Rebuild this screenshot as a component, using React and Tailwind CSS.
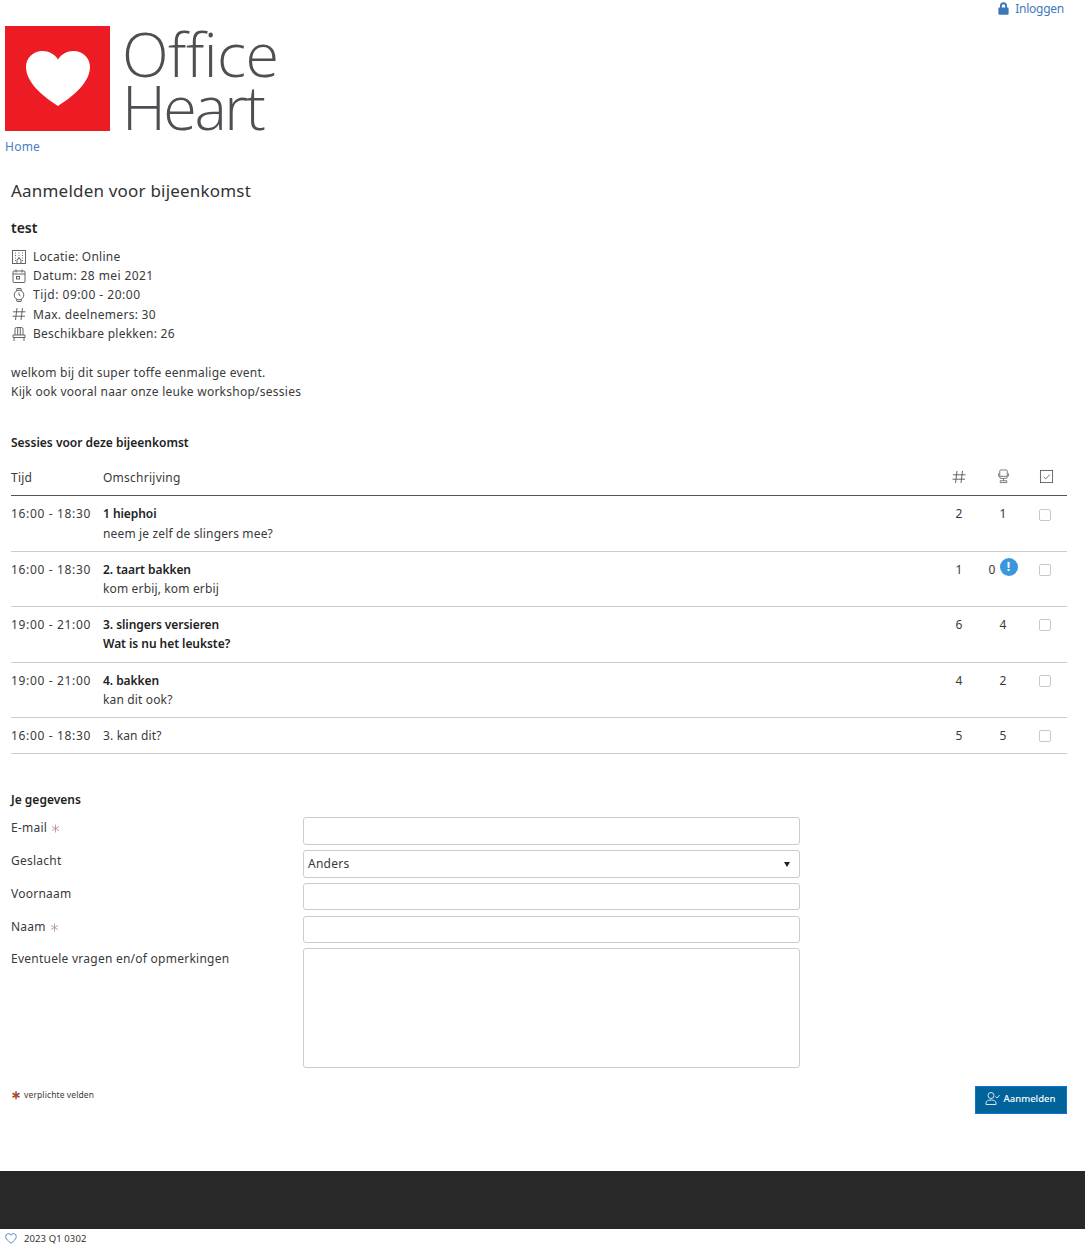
import React from "react";

const S = ({ children, w = 16, h = 16, className = "" }) => (
  <svg width={w} height={h} viewBox="0 0 16 16" fill="none" stroke="currentColor" strokeWidth="0.9" className={className}>{children}</svg>
);
const Building = () => (
  <S><rect x="1.500" y="1.500" width="13" height="13" /><path d="M4 4h1M7.500 4h1M11 4h1M4 6.500h1M7.500 6.500h1M11 6.500h1M4 9h1M11 9h1M4 11.500h1M11 11.500h1M6 14.500v-3a2 2 0 0 1 4 0v3M7 9h2" /></S>
);
const Calendar = () => (
  <S><rect x="2" y="3" width="12" height="11.500" rx="1" /><path d="M2 6h12M5 1.500v3M11 1.500v3" /><rect x="5.500" y="8.500" width="3" height="2.500" /></S>
);
const Watch = () => (
  <S><circle cx="8" cy="8" r="4.800" /><path d="M5.500 3.800 6 1.500h4l.5 2.300M5.500 12.200l.5 2.300h4l.5-2.300M8 5.500V8l1.500 1" /></S>
);
const Hash = () => (
  <S><path d="M6 2 4.500 14M11.500 2 10 14M2 5.800h12.500M1.500 10.200H14" /></S>
);
const Chair = () => (
  <S><path d="M4 9V3a1.500 1.500 0 0 1 1.500-1.500h5A1.500 1.500 0 0 1 12 3v6M6.700 1.500V9M9.300 1.500V9M2 9h12v2.500H2zM3 11.500V15M13 11.500V15" /></S>
);
const Desk = () => (
  <S w={15} h={15}><rect x="4" y="1" width="8" height="9" rx="1.200" /><path d="M2.800 4.500v3.500M13.200 4.500v3.500M4 7.800h8M8 10v2.500M4.500 14.500v-2h7v2z" /></S>
);
const CheckBoxIcon = () => (
  <S w={15} h={15}><rect x="1.500" y="1.500" width="13" height="13" /><path d="M5 8.500 7.200 10.500 11.500 6" /></S>
);
const Star = () => (
  <svg width="9" height="9" viewBox="0 0 9 9" stroke="#b0898c" strokeWidth="0.8" className="ml-[4px] mt-[6px]"><path d="M4.500 0.500v8M1 2.500l7 4M8 2.500l-7 4" /></svg>
);

const rows = [
  { h: "h-[56px]", t: "16:00 - 18:30", a: "1 hiephoi", b: "neem je zelf de slingers mee?", gap: "mt-[1px]", n: "2", m: "1", cb: "mt-[5px]" },
  { h: "h-[55px]", t: "16:00 - 18:30", a: "2. taart bakken", b: "kom erbij, kom erbij", n: "1", m: "0", info: true, cb: "mt-[4px]" },
  { h: "h-[56px]", t: "19:00 - 21:00", a: "3. slingers versieren", b: "Wat is nu het leukste?", bold: true, n: "6", m: "4", cb: "mt-[4px]" },
  { h: "h-[55px]", t: "19:00 - 21:00", a: "4. bakken", b: "kan dit ook?", n: "4", m: "2", cb: "mt-[4px]" },
  { h: "h-[36px]", t: "16:00 - 18:30", a: "3. kan dit?", plain: true, n: "5", m: "5", cb: "mt-[4px]" },
];

const fields = [
  { label: "E-mail", star: true, h: "h-[28px]", mb: "mb-[5px]" },
  { label: "Geslacht", select: true, h: "h-[28px]", mb: "mb-[5px]" },
  { label: "Voornaam", h: "h-[27px]", mb: "mb-[6px]" },
  { label: "Naam", star: true, h: "h-[27px]", mb: "mb-[5px]" },
  { label: "Eventuele vragen en/of opmerkingen", h: "h-[120px]", mb: "" },
];

const info = [
  [Building, "Locatie: Online", "h-[19px]", ""],
  [Calendar, "Datum: 28 mei 2021", "h-[19px]", "tracking-[0.4px]"],
  [Watch, "Tijd: 09:00 - 20:00", "h-[19px]", "tracking-[0.5px]"],
  [Hash, "Max. deelnemers: 30", "h-[20px]", "tracking-[0.3px]"],
  [Chair, "Beschikbare plekken: 26", "h-[19px]", ""],
];

export default function App() {
  return (
    <div className="bg-white w-[1085px] h-[1250px] overflow-hidden text-[12px] leading-[19px] tracking-[0.25px] text-[#3a3a3a]" style={{ fontFamily: '"Noto Sans", sans-serif' }}>
      <div className="h-[26px] flex justify-end pr-[21px]">
        <a className="flex items-start gap-[5px] text-[#3f78bd] text-[12px] leading-[17px] tracking-[-0.25px]">
          <svg width="13" height="15" viewBox="0 0 14 15" className="mt-[1px]" fill="#3a78bb"><path d="M3.200 6.500V4.600a3.800 3.800 0 0 1 7.600 0v1.900h.7c.5 0 1 .4 1 1v5.600c0 .5-.5 1-1 1h-9c-.5 0-1-.5-1-1V7.500c0-.6.5-1 1-1zm2-1.900v1.900h3.600V4.600a1.800 1.800 0 0 0-3.600 0z" /></svg>
          Inloggen
        </a>
      </div>
      <div className="flex pl-[5px] h-[105px]">
        <div className="w-[105px] h-[105px] bg-[#ed1c24] flex items-center justify-center">
          <svg width="64" height="56" viewBox="0 0 64 56" fill="#fff"><path d="M32 55C23 49 0 34 0 16 0 7 7 0 16.500 0 23 0 28.500 3 32 8.500 35.500 3 41 0 47.500 0 57 0 64 7 64 16 64 34 41 49 32 55z" /></svg>
        </div>
        <div className="ml-[12px] pt-[1px] text-[#4d4f53] text-[61px] leading-[53px] font-light" style={{ fontFamily: '"Open Sans", sans-serif' }}>
          <div className="tracking-[-0.5px]">Office</div>
          <div className="tracking-[-2.500px]">Heart</div>
        </div>
      </div>
      <div className="pl-[5px] pt-[6px] text-[#4a7ebf] h-[34px]">Home</div>

      <div className="pl-[11px]">
        <div className="w-[1056px]">
          <h1 className="text-[17px] leading-[28px] text-[#333] tracking-[0.2px] mt-[12px]">Aanmelden voor bijeenkomst</h1>
          <h2 className="text-[14px] leading-[20px] font-semibold text-[#222] tracking-normal mt-[13px]">test</h2>
          <div className="mt-[9px]">
            {info.map(([I, t, h, tr]) => (
              <div key={t} className={`flex items-center gap-[6px] ${h} ${tr}`}><span className="text-[#555]"><I /></span>{t}</div>
            ))}
          </div>
          <p className="mt-[20px]">welkom bij dit super toffe eenmalige event.</p>
          <p>Kijk ook vooral naar onze leuke workshop/sessies</p>

          <h3 className="mt-[32px] font-semibold text-[#222] tracking-[0px]">Sessies voor deze bijeenkomst</h3>
          <div className="mt-[16px] flex h-[28px] border-b border-[#555]">
            <div className="w-[92px]">Tijd</div>
            <div className="flex-1">Omschrijving</div>
            <div className="w-[44px] flex justify-center text-[#555] pt-[1px]"><Hash /></div>
            <div className="w-[44px] flex justify-center text-[#666] pt-[1px]"><Desk /></div>
            <div className="w-[42px] pl-[14px] text-[#555] pt-[1px]"><CheckBoxIcon /></div>
          </div>
          {rows.map((r, i) => (
            <div key={i} className={`flex ${r.h} border-b border-[#ccc] pt-[8px]`}>
              <div className="w-[92px] tracking-[0.66px]">{r.t}</div>
              <div className="flex-1 tracking-[0.15px]">
                {r.plain ? r.a : (
                  <>
                    <div className="font-semibold text-[#222] tracking-[-0.05px]">{r.a}</div>
                    <div className={`${r.gap || ""} ${r.bold ? "font-semibold text-[#222] tracking-[-0.05px]" : ""}`}>{r.b}</div>
                  </>
                )}
              </div>
              <div className="w-[44px] text-center">{r.n}</div>
              {r.info ? (
                <div className="w-[44px] flex justify-center items-start gap-[4px]">
                  <span>{r.m}</span>
                  <span className="-mt-[2px] w-[18px] h-[18px] rounded-full bg-[#3a97dc] text-white flex items-center justify-center font-bold text-[12px] leading-none tracking-normal">!</span>
                </div>
              ) : (
                <div className="w-[44px] text-center">{r.m}</div>
              )}
              <div className="w-[42px] pl-[14px]"><span className={`block w-3 h-3 ${r.cb} border border-[#c8c8c8] rounded-[2px] bg-white`} /></div>
            </div>
          ))}

          <h3 className="mt-[36px] font-semibold text-[#222] tracking-[0px]">Je gegevens</h3>
          <div className="mt-[8px]">
            {fields.map((f) => (
              <div key={f.label} className={`flex ${f.mb}`}>
                <div className="w-[292px] flex items-start pt-[1px]">{f.label}{f.star && <Star />}</div>
                <div className={`w-[497px] ${f.h} border border-[#ccc] rounded-[3px] bg-white flex items-center justify-between pl-[4px] pr-[9px]`}>
                  {f.select && (
                    <>
                      <span className="-mt-[1px]">Anders</span>
                      <span className="w-0 h-0 border-x-[3px] border-x-transparent border-t-[5px] border-t-[#222]" />
                    </>
                  )}
                </div>
              </div>
            ))}
          </div>
          <div className="mt-[18px] flex justify-between items-start">
            <div className="flex items-center text-[8.500px] leading-[18px] tracking-[0.1px]">
              <span className="text-[#a3492c] text-[12px] leading-none mr-[3px] font-bold">∗</span>verplichte velden
            </div>
            <button className="w-[92px] h-[28px] pb-[3px] pr-[2px] bg-[#00639a] border border-[#0a76d8] text-white text-[9.500px] font-medium tracking-normal flex items-center justify-center gap-[4px]">
              <svg width="15" height="13" viewBox="0 0 15 13" fill="none" stroke="#d5e6f2" strokeWidth="1"><circle cx="6" cy="3.500" r="3" /><path d="M1 12.500v-1.500c0-2 1.800-3 5-3s5 1 5 3v1.500zM10.500 4.500 12 6l2.500-3" /></svg>
              Aanmelden
            </button>
          </div>
        </div>
      </div>

      <div className="mt-[57px] h-[58px] bg-[#282828]" />
      <div className="flex items-center pl-[5px] h-[18px] text-[9.500px] tracking-[0.1px] text-[#333]">
        <svg width="12" height="11" viewBox="0 0 24 22" fill="none" stroke="#4a7ebf" strokeWidth="1.800" className="mr-[7px]"><path d="M12 20.500C6 16 1.500 12 1.500 7A5.500 5.500 0 0 1 12 4.500 5.500 5.500 0 0 1 22.500 7C22.500 12 18 16 12 20.500z" /></svg>
        2023 Q1 0302
      </div>
    </div>
  );
}
